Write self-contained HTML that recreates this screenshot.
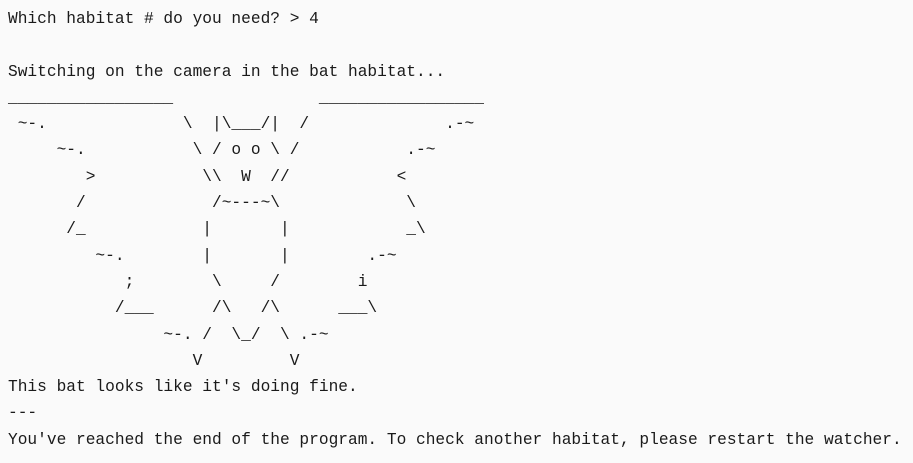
<!DOCTYPE html>
<html><head><meta charset="utf-8"><style>
html,body{margin:0;padding:0;background:#fafafa;width:913px;height:463px;overflow:hidden}
pre{margin:0;padding:6px 0 0 8px;font-family:"Liberation Mono",monospace;font-size:16.2px;line-height:26.3px;color:#1a1a1a}
</style></head><body><pre>Which habitat # do you need? &gt; 4

Switching on the camera in the bat habitat...
_________________               _________________
 ~-.              \  |\___/|  /              .-~
     ~-.           \ / o o \ /           .-~
        &gt;           \\  W  //           &lt;
       /             /~---~\             \
      /_            |       |            _\
         ~-.        |       |        .-~
            ;        \     /        i
           /___      /\   /\      ___\
                ~-. /  \_/  \ .-~
                   V         V
This bat looks like it's doing fine.
---
You've reached the end of the program. To check another habitat, please restart the watcher.</pre></body></html>
